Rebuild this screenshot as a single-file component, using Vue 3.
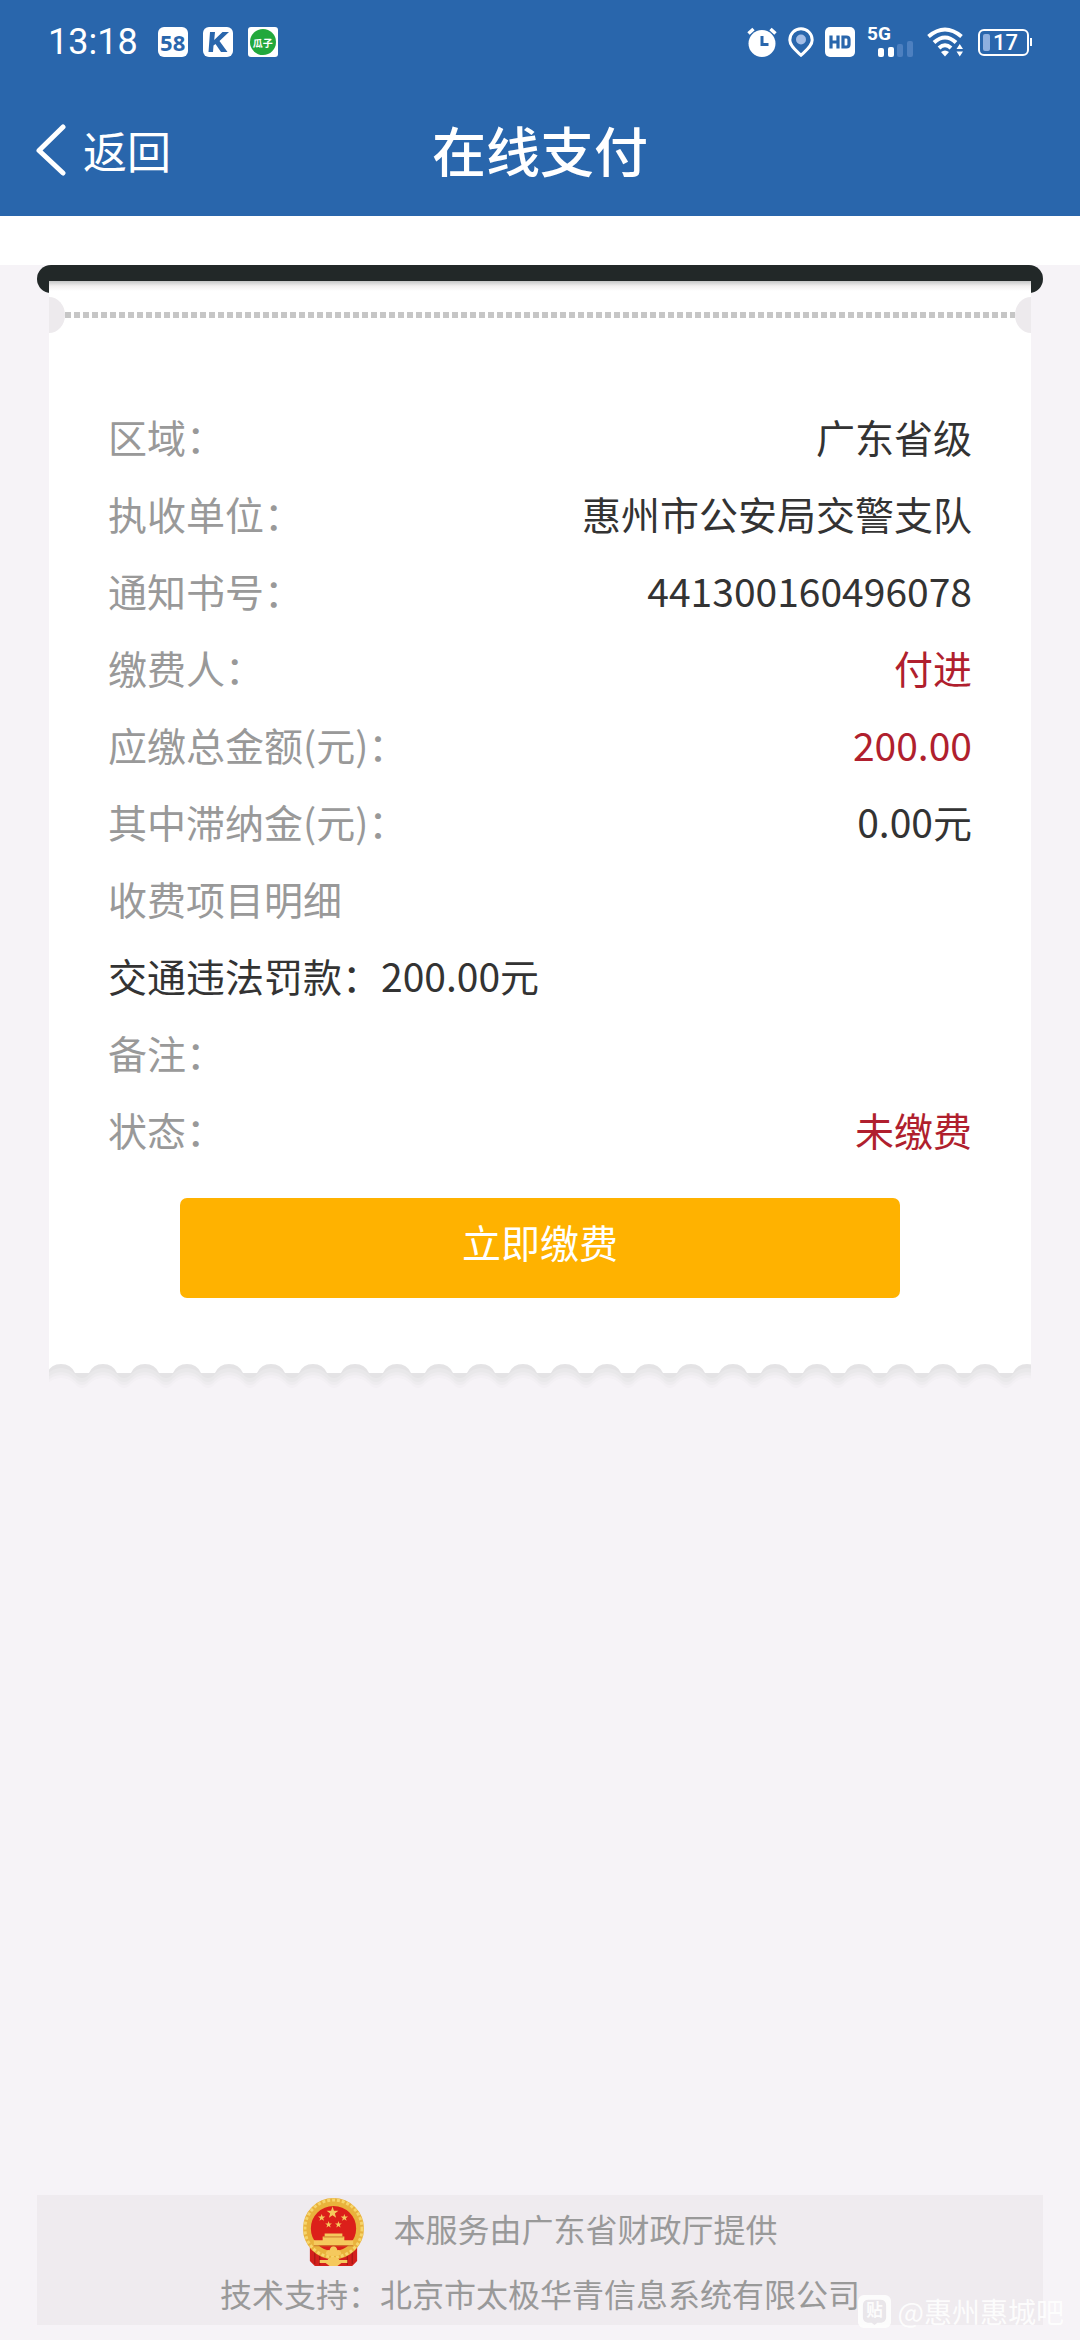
<script setup>
import { ref } from 'vue';

// Bill details shown on the receipt
const rows = ref([
  { label: '区域：', value: '广东省级' },
  { label: '执收单位：', value: '惠州市公安局交警支队' },
  { label: '通知书号：', value: '441300160496078' },
  { label: '缴费人：', value: '付进', highlight: true },
  { label: '应缴总金额(元)：', value: '200.00', highlight: true },
  { label: '其中滞纳金(元)：', value: '0.00元' },
  { label: '收费项目明细', value: '' },
  { label: '', detail: '交通违法罚款：200.00元' },
  { label: '备注：', value: '' },
  { label: '状态：', value: '未缴费', highlight: true }
]);

// Layers of the torn edge shadow, from light to dark
const edgeLayers = [
  { y: 10, color: '#f3f0f4' },
  { y: 7, color: '#eeecef' },
  { y: 4, color: '#e9e8ea' },
  { y: 0, color: '#e4e3e5' }
];

const star = 'M0-6 1.4-1.9 5.7-1.9 2.3.7 3.5 4.9 0 2.3-3.5 4.9-2.3.7-5.7-1.9-1.4-1.9z';
const stars = [
  { x: 31, y: 15, size: 1.05 },
  { x: 20, y: 20, size: 0.65 },
  { x: 43, y: 20, size: 0.65 },
  { x: 27, y: 27, size: 0.6 },
  { x: 37, y: 27, size: 0.6 }
];
</script>

<template>
  <div class="page">
    <header class="header">
      <div class="status-bar">
        <div class="status-left">
          <span class="clock">13:18</span>
          <span class="app-badge badge-58">58</span>
          <svg class="app-icon" width="30" height="30" viewBox="0 0 30 30">
            <rect width="30" height="30" rx="6" fill="#fff" />
            <path d="M7 5h5l-.8 8L19.500 5H26l-9.500 9L24.500 25H18l-5.500-8-2 1.500L10 25H5.500z" fill="#2966ac" />
          </svg>
          <span class="app-badge badge-gz"><span class="gz-dot">瓜子</span></span>
        </div>
        <div class="status-right">
          <svg width="30" height="30" viewBox="0 0 30 30">
            <circle cx="15" cy="16.500" r="13.500" fill="#fff" />
            <path d="M1.500 6.500 6.500 2M28.500 6.500 23.500 2" stroke="#fff" stroke-width="3.500" />
            <path d="M15 9v8.500h6.500" fill="none" stroke="#2966ac" stroke-width="3" />
          </svg>
          <svg class="pin" width="26" height="30" viewBox="0 0 26 30">
            <path d="M13 1.700A11.200 11.200 0 0 0 1.800 12.900C1.800 19 8 23.500 13 28.200 18 23.500 24.200 19 24.200 12.900A11.200 11.200 0 0 0 13 1.700z" fill="none" stroke="#fff" stroke-width="3" />
            <circle cx="13" cy="12.500" r="5" fill="#a3bde6" />
          </svg>
          <svg class="hd" width="30" height="30" viewBox="0 0 30 30">
            <rect width="30" height="30" rx="5" fill="#fff" />
            <path d="M6 8.500v13M13 8.500v13M6 15h7M18 10v10h3.500q2.500 0 2.500-2.500v-5q0-2.500-2.500-2.500z" fill="none" stroke="#2966ac" stroke-width="3.200" />
          </svg>
          <div class="signal">
            <span class="signal-type">5G</span>
            <svg width="36" height="16" viewBox="0 0 36 16">
              <rect x="0" y="7" width="6" height="9" rx="2" fill="#fff" />
              <rect x="10" y="6" width="6" height="10" rx="2" fill="#fff" />
              <rect x="19" y="3" width="6" height="13" rx="2" fill="#4d80c0" />
              <rect x="29" y="0" width="6" height="16" rx="2" fill="#4d80c0" />
            </svg>
          </div>
          <svg class="wifi" width="38" height="30" viewBox="0 0 38 30">
            <g fill="none" stroke="#fff" stroke-width="4">
              <path d="M1.500 9.500Q18 -4.500 34.500 9.500" />
              <path d="M7 15.500Q18 5.500 29 15.500" />
              <path d="M12 21Q18 15.500 24 21" />
            </g>
            <path d="M14 25q4-3 8 0l-4 4.500z" fill="#fff" />
            <path d="M29.500 22h6.500L32.750 17zM29.500 24.500h6.500L32.750 29.500z" fill="#fff" />
          </svg>
          <div class="battery">
            <div class="battery-body"><span class="battery-level"></span>17</div>
            <span class="battery-tip"></span>
          </div>
        </div>
      </div>
      <div class="nav">
        <button type="button" class="back">
          <svg width="30" height="52" viewBox="0 0 30 52">
            <path d="M27 3 3 26.500 27 49" fill="none" stroke="#fff" stroke-width="5" stroke-linecap="round" stroke-linejoin="round" />
          </svg>
          返回
        </button>
        <h1 class="title">在线支付</h1>
      </div>
    </header>

    <main class="content">
      <div class="slot"></div>
      <section class="receipt">
        <div class="tear-line">
          <span class="notch notch-left"></span>
          <span class="dashes"></span>
          <span class="notch notch-right"></span>
        </div>
        <dl class="rows">
          <div v-for="(row, i) in rows" :key="i" class="row">
            <dt v-if="row.label" class="label">{{ row.label }}</dt>
            <dd v-if="row.detail" class="value">{{ row.detail }}</dd>
            <dd v-if="row.value" class="value" :class="{ highlight: row.highlight }">{{ row.value }}</dd>
          </div>
        </dl>
        <button type="button" class="pay">立即缴费</button>
      </section>
      <svg class="torn-edge" width="100%" height="26">
        <defs>
          <pattern id="scallop" x="-9" width="42" height="26" patternUnits="userSpaceOnUse">
            <path
              v-for="layer in edgeLayers"
              :key="layer.y"
              :transform="`translate(0 ${layer.y})`"
              d="M0-20H42V14Q38 14 35 10Q29 4 21 4T7 10Q4 14 0 14z"
              :fill="layer.color"
            />
            <path d="M0 0H42V9H35Q31 0 21 0T7 9H0z" fill="#fff" />
          </pattern>
        </defs>
        <rect width="100%" height="26" fill="url(#scallop)" />
      </svg>
    </main>

    <footer class="footer">
      <div class="provider">
        <svg class="emblem" width="63" height="68" viewBox="0 0 64 69">
          <path d="M8 48h48v16l-5 5H13l-5-5z" fill="#d3201c" />
          <path d="M13 53v14M18 57v11M46 57v11M51 53v14" stroke="#9e1712" stroke-width="1" />
          <circle cx="32" cy="31" r="27" fill="#dc1f1a" stroke="#e9b23c" stroke-width="8" />
          <circle cx="32" cy="31" r="29" fill="none" stroke="#f6d56b" stroke-width="3" stroke-dasharray="3 2" />
          <g fill="#f5c95d">
            <path v-for="(s, i) in stars" :key="i" :d="star" :transform="`translate(${s.x} ${s.y}) scale(${s.size})`" />
            <path d="M23 36h18v3h2v4h9v5H12v-5h9v-4h2z" />
            <path d="M24 57q1-5 4-4 1-4 4-4t4 4q3-1 4 4-8 4-16 0z" />
            <path d="M18 63h8q1-3 6-3t6 3h8v3h-6l-4 3h-8l-4-3h-6z" />
          </g>
          <path d="M12 48.500h40M22 39.500h20" stroke="#c9792b" stroke-width="1" />
        </svg>
        <span class="provider-name">本服务由广东省财政厅提供</span>
      </div>
      <p class="support">技术支持：北京市太极华青信息系统有限公司</p>
    </footer>

    <div class="watermark">
      <svg width="33" height="33" viewBox="0 0 34 34">
        <rect width="34" height="34" rx="6" fill="#fff" />
        <path d="M17 31l-3-2.500H10Q5 28 5 23V11Q5 5 11 5h12q6 0 6 6v12q0 5-5 5.500h-4z" fill="#e9e6ea" />
        <text x="17" y="22" text-anchor="middle" font-size="17" font-weight="700" fill="#fff">贴</text>
      </svg>
      <span>@惠州惠城吧</span>
    </div>
  </div>
</template>

<style>
body {
  margin: 0;
  background: #f6f3f7;
}
</style>

<style scoped>
.page {
  position: relative;
  display: flex;
  flex-direction: column;
  box-sizing: border-box;
  min-height: 100vh;
  padding-bottom: 15px;
  background: #f6f3f7;
  color: #333;
  font-family: "Noto Sans CJK SC", sans-serif;
}

.header {
  background: #2966ac;
  border-bottom: 49px solid #fff;
  color: #fff;
}

.status-bar {
  display: flex;
  align-items: center;
  justify-content: space-between;
  height: 84px;
  padding: 0 48px;
}

.status-left,
.status-right {
  display: flex;
  align-items: center;
}

.status-left {
  gap: 15px;
}

.clock {
  margin-right: 5px;
  font-family: Roboto, sans-serif;
  font-size: 36px;
  line-height: 40px;
}

.app-badge {
  display: flex;
  align-items: center;
  justify-content: center;
  width: 30px;
  height: 30px;
  border-radius: 6px;
  background: #fff;
}

.badge-58 {
  color: #2966ac;
  font-family: "Open Sans", sans-serif;
  font-size: 22px;
  font-weight: 700;
}

.badge-gz {
  border-radius: 3px;
}

.gz-dot {
  display: flex;
  align-items: center;
  justify-content: center;
  width: 26px;
  height: 26px;
  border-radius: 50%;
  background: #22a83c;
  font-size: 10px;
  font-weight: 700;
}

.pin,
.hd {
  margin-left: 11px;
}

.signal {
  display: flex;
  flex-direction: column;
  width: 47px;
  height: 30px;
  margin-left: 12px;
}

.signal-type {
  font-family: Roboto, sans-serif;
  font-size: 19px;
  font-weight: 700;
  line-height: 14px;
}

.signal svg {
  align-self: flex-end;
}

.wifi {
  margin-left: 13px;
}

.battery {
  display: flex;
  align-items: center;
  margin-left: 13px;
}

.battery-body {
  display: flex;
  align-items: center;
  gap: 3px;
  box-sizing: border-box;
  width: 51px;
  height: 27px;
  padding-left: 3px;
  border: 2px solid #fff;
  border-radius: 6px;
  font-family: Roboto, sans-serif;
  font-size: 22px;
  font-weight: 500;
}

.battery-level {
  width: 7px;
  height: 17px;
  border-radius: 2px;
  background: #8fb0df;
}

.battery-tip {
  width: 2px;
  height: 8px;
  margin-left: 1px;
  background: #fff;
}

.nav {
  display: grid;
  grid-template-columns: 1fr auto 1fr;
  align-items: center;
  height: 132px;
  padding: 0 36px;
}

.back {
  display: flex;
  align-items: center;
  justify-self: start;
  gap: 17px;
  padding: 0;
  border: 0;
  background: none;
  color: #fff;
  font-family: inherit;
  font-size: 44px;
  line-height: 60px;
  cursor: pointer;
}

.title {
  margin: 0;
  font-size: 54px;
  font-weight: 500;
  line-height: 78px;
}

.content {
  flex: 1;
  padding: 0 37px;
}

.slot {
  height: 28px;
  border-radius: 14px;
  background: #222828;
}

.receipt {
  position: relative;
  margin: -12px 12px 0;
  padding: 16px 0 66px;
  background: linear-gradient(#c4c6c6, #f2f0f0 5px, #fff 10px);
}

.tear-line {
  display: flex;
  align-items: center;
}

.notch {
  width: 16px;
  height: 36px;
  background: #edeaed;
}

.notch-left {
  border-radius: 0 16px 16px 0 / 0 18px 18px 0;
}

.notch-right {
  border-radius: 16px 0 0 16px / 18px 0 0 18px;
}

.dashes {
  flex: 1;
  height: 6px;
  background: repeating-linear-gradient(to right, #c6c6c6 0 6px, transparent 6px 9px);
}

.rows {
  margin: 65px 59px 30px;
  font-size: 39px;
  line-height: 77px;
}

.row {
  display: flex;
  justify-content: space-between;
  min-height: 77px;
}

.label {
  color: #999;
}

.value {
  margin: 0;
}

.highlight {
  color: #b01f2e;
}

.pay {
  display: block;
  width: calc(100% - 262px);
  height: 100px;
  margin: 0 auto;
  padding: 0 0 14px;
  border: 0;
  border-radius: 7px;
  background: #ffb200;
  color: #fff;
  font-family: inherit;
  font-size: 39px;
  cursor: pointer;
}

.torn-edge {
  display: block;
  width: calc(100% - 24px);
  margin: 0 12px;
}

.footer {
  margin: 0 37px;
  padding: 3px 0 8px;
  background: #efebef;
  color: #999;
  font-size: 32px;
  line-height: 48px;
  text-align: center;
}

.provider {
  display: flex;
  align-items: center;
  justify-content: center;
  gap: 28px;
}

.provider-name {
  padding-bottom: 8px;
}

.support {
  margin: 3px 0 0;
}

.watermark {
  position: absolute;
  right: 16px;
  bottom: 9px;
  display: flex;
  align-items: center;
  gap: 7px;
  color: #fff;
  font-size: 28px;
  line-height: 40px;
  opacity: 0.85;
}
</style>
